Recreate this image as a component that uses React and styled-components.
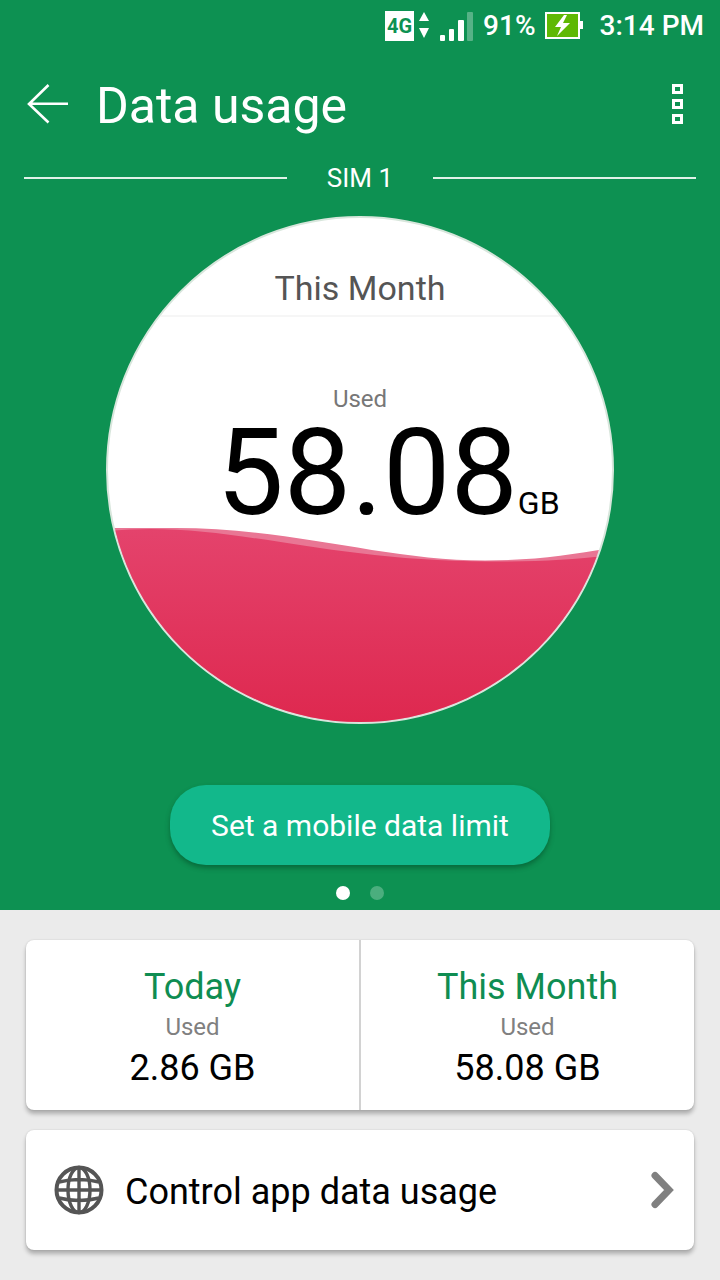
import React, { useState } from 'react';
import styled, { createGlobalStyle } from 'styled-components';

const GlobalStyle = createGlobalStyle`
  * {
    box-sizing: border-box;
  }

  body {
    margin: 0;
    background: #ebebeb;
    font-family: Roboto, 'Noto Sans', sans-serif;
  }

  h1,
  h2,
  p {
    margin: 0;
    font-weight: 400;
  }

  button {
    padding: 0;
    border: 0;
    background: none;
    color: inherit;
    font: inherit;
    cursor: pointer;
  }

  svg {
    display: block;
    flex: none;
  }
`;

const Page = styled.div`
  min-height: 100vh;
`;

const Hero = styled.section`
  display: flex;
  flex-direction: column;
  align-items: center;
  padding-bottom: 10px;
  background: #0d9152;
  color: #fff;
`;

const StatusBar = styled.div`
  display: flex;
  align-self: stretch;
  align-items: center;
  justify-content: flex-end;
  padding-right: 16px;
  font-size: 28px;
  font-weight: 500;
  line-height: 52px;
`;

const NetworkBadge = styled.span`
  width: 29px;
  margin-right: 4px;
  background: #fff;
  color: #0d9152;
  font-size: 20px;
  font-weight: 700;
  line-height: 30px;
  text-align: center;
`;

const SignalIcon = styled.svg`
  margin: 0 9px;
`;

const BatteryIcon = styled.svg`
  margin: 0 16px 0 8px;
`;

const Header = styled.header`
  display: flex;
  align-self: stretch;
  align-items: center;
  height: 108px;
  padding: 0 32px 0 24px;
`;

const IconButton = styled.button`
  display: flex;
  align-items: center;
  justify-content: center;
  height: 60px;
`;

const Title = styled.h1`
  flex: 1;
  padding-left: 24px;
  font-size: 50px;
  line-height: 60px;
`;

const SimRow = styled.div`
  display: flex;
  align-self: stretch;
  align-items: center;
  gap: 40px;
  padding: 0 24px;
  font-size: 26px;
  line-height: 36px;

  &::before,
  &::after {
    content: '';
    flex: 1;
    height: 2px;
    background: #e0f2e8;
  }
`;

const Gauge = styled.div`
  position: relative;
  width: 508px;
  height: 508px;
  margin-top: 20px;
  overflow: hidden;
  border: 2px solid #d8e6dc;
  border-radius: 50%;
  background: #fff;
  text-align: center;
`;

const Wave = styled.svg`
  position: absolute;
  inset: 0;
  width: 100%;
  height: 100%;
`;

const GaugeContent = styled.div`
  position: relative;
`;

const GaugeTitle = styled.h2`
  padding: 50px 0 7px;
  border-bottom: 2px solid #f6f6f6;
  color: #555;
  font-size: 34px;
  line-height: 40px;
`;

const GaugeLabel = styled.p`
  margin-top: 68px;
  color: #777;
  font-size: 24px;
  line-height: 28px;
`;

const GaugeValue = styled.p`
  padding-left: 56px;
  color: #000;
  font-size: 120px;
  line-height: 120px;
`;

const GaugeUnit = styled.span`
  font-size: 32px;
`;

const LimitButton = styled.button`
  width: 380px;
  height: 80px;
  margin-top: 61px;
  padding-top: 2px;
  border-radius: 36px;
  background: #12b88b;
  box-shadow: 0 3px 5px rgba(0, 60, 30, 0.45);
  font-size: 30px;
  line-height: 36px;
`;

const Pager = styled.div`
  display: flex;
  gap: 20px;
  margin-top: 21px;
`;

const Dot = styled.button`
  width: 14px;
  height: 14px;
  border-radius: 50%;
  background: ${({ $active }) => ($active ? '#fff' : '#4bae7e')};
`;

const Cards = styled.main`
  display: flex;
  flex-direction: column;
  gap: 20px;
  padding: 30px 26px;
`;

const Card = styled.section`
  display: flex;
  border-radius: 8px;
  background: #fff;
  box-shadow: 0 4px 4px rgba(0, 0, 0, 0.26), 0 0 2px rgba(0, 0, 0, 0.14);
`;

const Stat = styled.div`
  flex: 1;
  padding: 25px 0 19px;
  text-align: center;

  & + & {
    border-left: 2px solid #d2d2d2;
  }
`;

const StatTitle = styled.h2`
  color: #0f8d52;
  font-size: 36px;
  line-height: 44px;
`;

const StatLabel = styled.p`
  color: #808080;
  font-size: 24px;
  line-height: 36px;
`;

const StatValue = styled.p`
  color: #000;
  font-size: 36px;
  line-height: 46px;
`;

const RowLink = styled.a`
  display: flex;
  flex: 1;
  align-items: center;
  height: 120px;
  padding: 0 20px 0 28px;
  color: #000;
  font-size: 36px;
  line-height: 44px;
  text-decoration: none;
`;

const RowText = styled.span`
  flex: 1;
  padding: 4px 0 0 21px;
`;

const stats = [
  { title: 'Today', value: '2.86 GB' },
  { title: 'This Month', value: '58.08 GB' },
];

const App = () => {
  const [page, setPage] = useState(0);

  return (
    <Page>
      <GlobalStyle />
      <Hero>
        <StatusBar>
          <NetworkBadge>4G</NetworkBadge>
          <svg width="12" height="28" viewBox="0 0 12 28" fill="#fff" aria-hidden="true">
            <path d="M6 0L11 9H1zM6 26L1 16H11z" />
          </svg>
          <SignalIcon width="35" height="30" viewBox="0 0 35 30" fill="#fff" aria-hidden="true">
            <rect x="1" y="24" width="5" height="6" rx="1" />
            <rect x="10" y="18" width="5" height="12" rx="1" />
            <rect x="19" y="9" width="6" height="21" rx="1" />
            <rect x="28" y="1" width="6" height="29" rx="1" opacity="0.3" />
          </SignalIcon>
          <span>91%</span>
          <BatteryIcon width="40" height="28" viewBox="0 0 40 28" aria-hidden="true">
            <rect x="2" y="1" width="33" height="25" fill="#5fb804" stroke="#fff" strokeWidth="2" />
            <path d="M35 9h4v8h-4z" fill="#fff" />
            <path d="M20 3L11 15H17L13 24L26 11H19L23 3z" fill="#fff" />
          </BatteryIcon>
          <span>3:14 PM</span>
        </StatusBar>

        <Header>
          <IconButton aria-label="Back">
            <svg width="48" height="48" viewBox="0 0 48 48" fill="none" stroke="#fff" strokeWidth="2.6">
              <path d="M24.5 3L5 22L24.5 40.5M5 21.7H44" />
            </svg>
          </IconButton>
          <Title>Data usage</Title>
          <IconButton aria-label="More options">
            <svg width="20" height="48" viewBox="0 0 20 48" fill="none" stroke="#fff" strokeWidth="3">
              <path d="M5.5 3.5h8v7h-8zM5.5 18.5h8v7h-8zM5.5 33.5h8v7h-8z" />
            </svg>
          </IconButton>
        </Header>

        <SimRow>SIM 1</SimRow>

        <Gauge>
          <Wave viewBox="0 0 504 504" aria-hidden="true">
            <defs>
              <linearGradient id="waveFill" x1="0" y1="0" x2="0" y2="1">
                <stop offset="0" stopColor="#e4436c" />
                <stop offset="1" stopColor="#de284f" />
              </linearGradient>
            </defs>
            <path
              d="M0 310H67C187 310 277 342.500 377 342.500C427 342.500 462 337 504 330V504H0z"
              fill="#e97694"
            />
            <path
              d="M0 313Q20 311 42 311C142 311 232 343.500 382 343.500C432 343.500 462 342 504 337V504H0z"
              fill="url(#waveFill)"
            />
          </Wave>
          <GaugeContent>
            <GaugeTitle>This Month</GaugeTitle>
            <GaugeLabel>Used</GaugeLabel>
            <GaugeValue>
              58.08<GaugeUnit>GB</GaugeUnit>
            </GaugeValue>
          </GaugeContent>
        </Gauge>

        <LimitButton>Set a mobile data limit</LimitButton>

        <Pager>
          {[0, 1].map((index) => (
            <Dot
              key={index}
              $active={index === page}
              aria-label={`Page ${index + 1}`}
              onClick={() => setPage(index)}
            />
          ))}
        </Pager>
      </Hero>

      <Cards>
        <Card>
          {stats.map((stat) => (
            <Stat key={stat.title}>
              <StatTitle>{stat.title}</StatTitle>
              <StatLabel>Used</StatLabel>
              <StatValue>{stat.value}</StatValue>
            </Stat>
          ))}
        </Card>

        <Card>
          <RowLink href="#apps">
            <svg
              width="50"
              height="50"
              viewBox="0 0 50 50"
              fill="none"
              stroke="#555"
              strokeWidth="3.4"
              aria-hidden="true"
            >
              <circle cx="25" cy="25" r="22.5" strokeWidth="4" />
              <ellipse cx="25" cy="25" rx="11" ry="22.5" />
              <path d="M25 2V48M2 25H48M5 17Q25 12 45 17M5 33Q25 38 45 33" />
            </svg>
            <RowText>Control app data usage</RowText>
            <svg
              width="24"
              height="40"
              viewBox="0 0 24 40"
              fill="none"
              stroke="#808080"
              strokeWidth="7"
              strokeLinecap="round"
              strokeLinejoin="miter"
              aria-hidden="true"
            >
              <path d="M5 5.500L19 20L5 34.500" />
            </svg>
          </RowLink>
        </Card>
      </Cards>
    </Page>
  );
};

export default App;
